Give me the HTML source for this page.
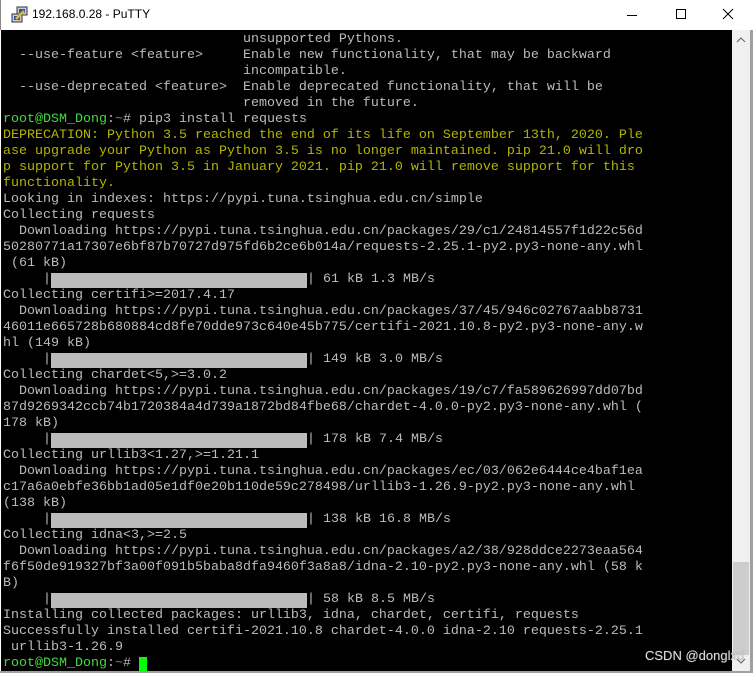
<!DOCTYPE html>
<html><head><meta charset="utf-8"><style>
*{margin:0;padding:0;box-sizing:border-box}
html,body{width:753px;height:673px;overflow:hidden;background:#fff}
.title{position:absolute;left:0;top:0;width:753px;height:30px;background:#fff;border-left:1px solid #888;}
.title .t{position:absolute;left:31px;top:7px;font:12px "Liberation Sans",sans-serif;color:#000}
.term{position:absolute;left:1px;top:30px;width:731px;height:641px;background:#000;overflow:hidden}
pre{position:absolute;left:2px;top:2px;font-family:"Liberation Mono",monospace;font-size:13.333px;line-height:16px;color:#bbb;white-space:pre}
.y{color:#b4b400}.g{color:#3fdc3f}.b{color:#6a6aff}
.bar{display:inline-block;width:256px;height:15px;background:#bbb;vertical-align:top;margin-top:1px}
.cur{display:inline-block;width:8px;height:15px;background:#00ff00;vertical-align:top;margin-top:1px}
.sb{position:absolute;left:732px;top:30px;width:18px;height:641px;background:#f0f0f0}
.thumb{position:absolute;left:1px;top:532px;width:16px;height:93px;background:#cdcdcd}
.edge{position:absolute;left:750px;top:30px;width:3px;height:643px;background:#a0a0a0}
.bot{position:absolute;left:0;top:671px;width:753px;height:2px;background:#a0a0a0}
.wm{position:absolute;left:645px;top:648px;font:13px "Liberation Sans",sans-serif;color:#ddd;z-index:5;white-space:nowrap;text-shadow:0 0 1px #666}
</style></head><body>
<div class="title">
<svg style="position:absolute;left:10px;top:6px" width="18" height="18" viewBox="0 0 18 18"><rect x="6" y="1" width="10" height="8" fill="#ccc" stroke="#333"/><rect x="8" y="3" width="6" height="4" fill="#3050c0"/><rect x="1" y="8" width="10" height="8" fill="#ccc" stroke="#333"/><rect x="3" y="10" width="6" height="4" fill="#3050c0"/><path d="M5 13 L13 5" stroke="#e8c000" stroke-width="2.5"/></svg>
<div class="t">192.168.0.28 - PuTTY</div>
<svg style="position:absolute;left:625px;top:9px" width="12" height="12"><path d="M1 6.5H11" stroke="#000"/></svg>
<svg style="position:absolute;left:674px;top:8px" width="12" height="12"><rect x="1.5" y="1.5" width="9" height="9" fill="none" stroke="#000"/></svg>
<svg style="position:absolute;left:721px;top:8px" width="12" height="12"><path d="M1 1L11 11M11 1L1 11" stroke="#000"/></svg>
</div>
<div class="term"><pre>                              unsupported Pythons.
  --use-feature &lt;feature&gt;     Enable new functionality, that may be backward
                              incompatible.
  --use-deprecated &lt;feature&gt;  Enable deprecated functionality, that will be
                              removed in the future.
<span class="g">root@DSM_Dong</span>:<span class="b">~</span># pip3 install requests
<span class="y">DEPRECATION: Python 3.5 reached the end of its life on September 13th, 2020. Ple
ase upgrade your Python as Python 3.5 is no longer maintained. pip 21.0 will dro
p support for Python 3.5 in January 2021. pip 21.0 will remove support for this
functionality.</span>
Looking in indexes: https://pypi.tuna.tsinghua.edu.cn/simple
Collecting requests
  Downloading https://pypi.tuna.tsinghua.edu.cn/packages/29/c1/24814557f1d22c56d
50280771a17307e6bf87b70727d975fd6b2ce6b014a/requests-2.25.1-py2.py3-none-any.whl
 (61 kB)
     |<span class="bar"></span>| 61 kB 1.3 MB/s
Collecting certifi&gt;=2017.4.17
  Downloading https://pypi.tuna.tsinghua.edu.cn/packages/37/45/946c02767aabb8731
46011e665728b680884cd8fe70dde973c640e45b775/certifi-2021.10.8-py2.py3-none-any.w
hl (149 kB)
     |<span class="bar"></span>| 149 kB 3.0 MB/s
Collecting chardet&lt;5,&gt;=3.0.2
  Downloading https://pypi.tuna.tsinghua.edu.cn/packages/19/c7/fa589626997dd07bd
87d9269342ccb74b1720384a4d739a1872bd84fbe68/chardet-4.0.0-py2.py3-none-any.whl (
178 kB)
     |<span class="bar"></span>| 178 kB 7.4 MB/s
Collecting urllib3&lt;1.27,&gt;=1.21.1
  Downloading https://pypi.tuna.tsinghua.edu.cn/packages/ec/03/062e6444ce4baf1ea
c17a6a0ebfe36bb1ad05e1df0e20b110de59c278498/urllib3-1.26.9-py2.py3-none-any.whl
(138 kB)
     |<span class="bar"></span>| 138 kB 16.8 MB/s
Collecting idna&lt;3,&gt;=2.5
  Downloading https://pypi.tuna.tsinghua.edu.cn/packages/a2/38/928ddce2273eaa564
f6f50de919327bf3a00f091b5baba8dfa9460f3a8a8/idna-2.10-py2.py3-none-any.whl (58 k
B)
     |<span class="bar"></span>| 58 kB 8.5 MB/s
Installing collected packages: urllib3, idna, chardet, certifi, requests
Successfully installed certifi-2021.10.8 chardet-4.0.0 idna-2.10 requests-2.25.1
 urllib3-1.26.9
<span class="g">root@DSM_Dong</span>:<span class="b">~</span># <span class="cur"></span></pre></div>
<div class="sb"><div class="thumb"></div>
<svg style="position:absolute;left:4px;top:6px" width="10" height="8"><path d="M1 6L5 2L9 6" fill="none" stroke="#606060"/></svg>
<svg style="position:absolute;left:4px;top:627px" width="10" height="8"><path d="M1 2L5 6L9 2" fill="none" stroke="#606060"/></svg>
</div>
<div class="edge"></div><div class="bot"></div>
<div class="wm">CSDN @donglxd</div>
</body></html>
